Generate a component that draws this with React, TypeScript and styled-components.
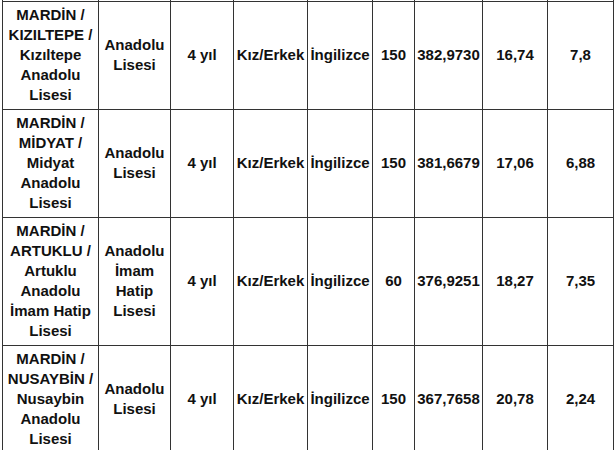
import React from 'react';
import styled, { createGlobalStyle } from 'styled-components';

const GlobalStyle = createGlobalStyle`
  body {
    margin: 0;
    background: #fff;
    font-family: "Liberation Sans", Arial, Helvetica, sans-serif;
  }
`;

const Wrap = styled.div`
  padding-left: 2px;
  width: 612px;
  overflow: hidden;
`;

const Table = styled.table`
  border-collapse: collapse;
  table-layout: fixed;
  width: 612px;
  color: #111;
  > tbody > tr > td {
    border: 1px solid #333;
    text-align: center;
    vertical-align: middle;
    font-size: 15px;
    font-weight: 700;
    line-height: 20px;
    padding: 3px 2px 4px;
  }
  > tbody > tr.cut > td {
    height: 1px;
    padding: 0;
    border-top: none;
  }
`;

type Row = {
  school: string;
  kind: string;
  years: string;
  gender: string;
  lang: string;
  quota: string;
  score: string;
  pct: string;
  last: string;
};

const rows: Row[] = [
  { school: 'MARDİN / KIZILTEPE / Kızıltepe Anadolu Lisesi', kind: 'Anadolu Lisesi', years: '4 yıl', gender: 'Kız/Erkek', lang: 'İngilizce', quota: '150', score: '382,9730', pct: '16,74', last: '7,8' },
  { school: 'MARDİN / MİDYAT / Midyat Anadolu Lisesi', kind: 'Anadolu Lisesi', years: '4 yıl', gender: 'Kız/Erkek', lang: 'İngilizce', quota: '150', score: '381,6679', pct: '17,06', last: '6,88' },
  { school: 'MARDİN / ARTUKLU / Artuklu Anadolu İmam Hatip Lisesi', kind: 'Anadolu İmam Hatip Lisesi', years: '4 yıl', gender: 'Kız/Erkek', lang: 'İngilizce', quota: '60', score: '376,9251', pct: '18,27', last: '7,35' },
  { school: 'MARDİN / NUSAYBİN / Nusaybin Anadolu Lisesi', kind: 'Anadolu Lisesi', years: '4 yıl', gender: 'Kız/Erkek', lang: 'İngilizce', quota: '150', score: '367,7658', pct: '20,78', last: '2,24' },
];

const widths = [96, 72, 63, 74, 65, 42, 68, 65, 66];

export default function App() {
  return (
    <Wrap>
      <GlobalStyle />
      <Table>
        <colgroup>
          {widths.map((w, i) => (
            <col key={i} style={{ width: w }} />
          ))}
        </colgroup>
        <tbody>
          <tr className="cut">
            {widths.map((_, i) => (
              <td key={i} />
            ))}
          </tr>
          {rows.map((r, i) => (
            <tr key={i}>
              <td>{r.school}</td>
              <td>{r.kind}</td>
              <td>{r.years}</td>
              <td>{r.gender}</td>
              <td>{r.lang}</td>
              <td>{r.quota}</td>
              <td>{r.score}</td>
              <td>{r.pct}</td>
              <td>{r.last}</td>
            </tr>
          ))}
        </tbody>
      </Table>
    </Wrap>
  );
}
